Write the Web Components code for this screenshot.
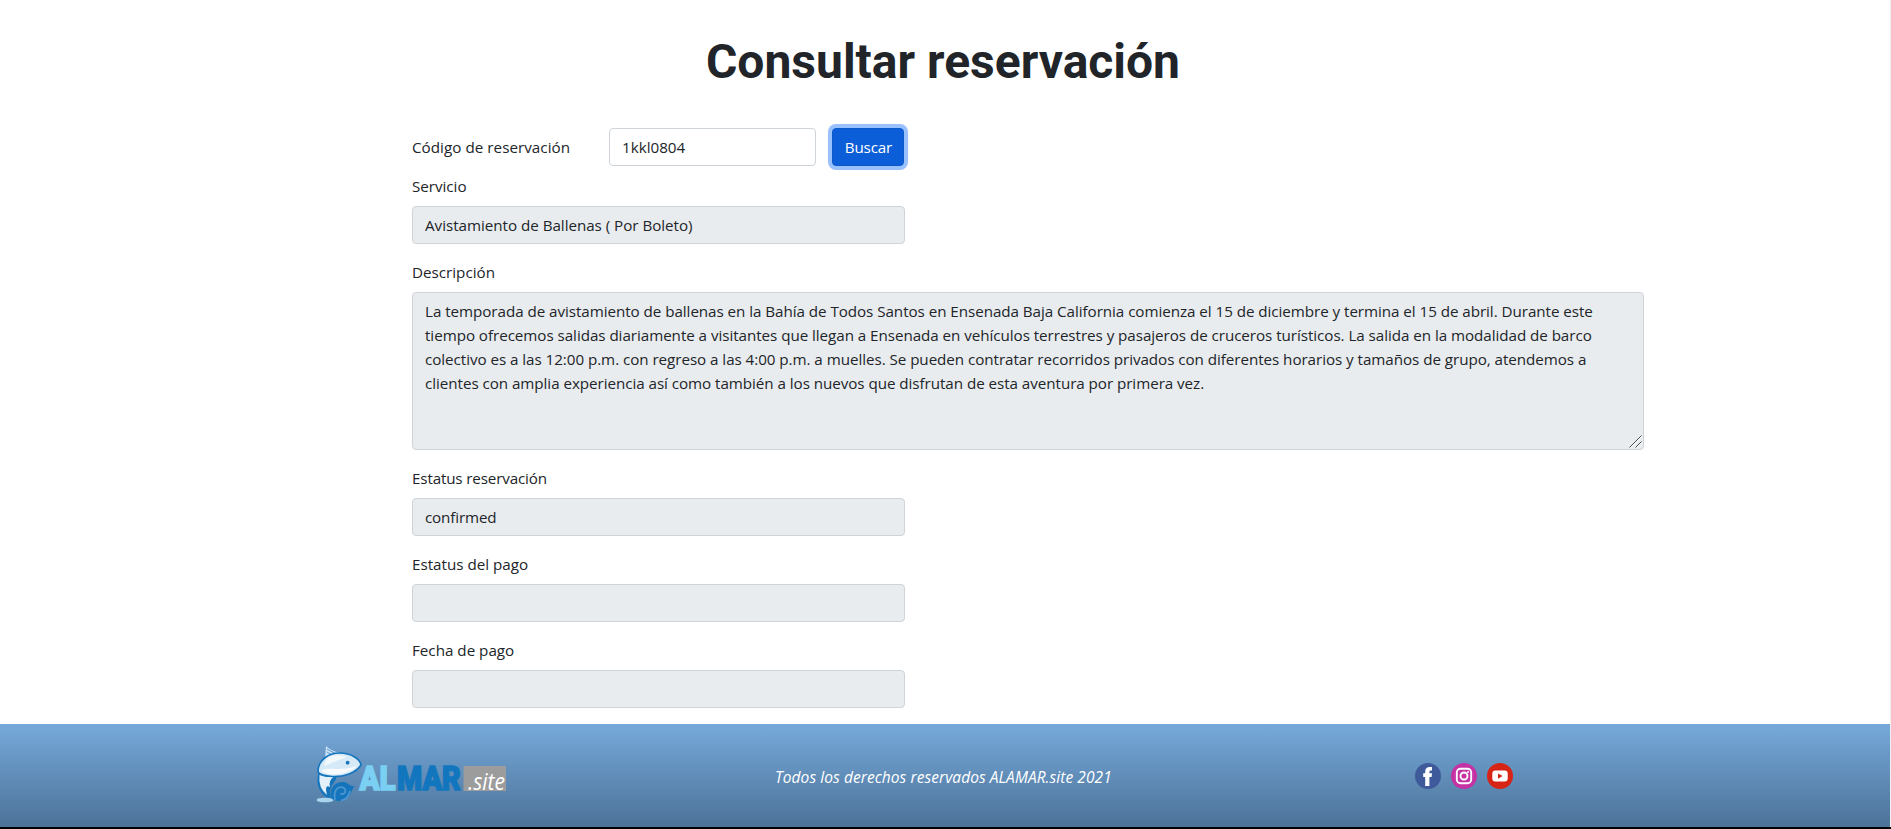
<!DOCTYPE html>
<html lang="es">
<head>
<meta charset="utf-8">
<title>Consultar reservación</title>
<style>
html,body{margin:0;height:100%;background:#fff}
body{font:15.2px/24px "Open Sans","Noto Sans",sans-serif;color:#212529;overflow:hidden}
</style>
</head>
<body>
<reservation-page></reservation-page>
<script>
const define = (name, html, setup) => customElements.define(name, class extends HTMLElement {
  connectedCallback() {
    if (this.shadowRoot) return;
    const t = document.createElement('template');
    t.innerHTML = html;
    this.attachShadow({mode: 'open'}).append(t.content.cloneNode(true));
    if (setup) setup(this, this.shadowRoot);
  }
});

const control = `
  input,textarea{box-sizing:border-box;display:block;width:100%;height:38px;margin:0;padding:6px 12px;
    border:1px solid #ced4da;border-radius:4px;background:#e9ecef;color:#212529;
    font:inherit;letter-spacing:inherit;outline:0}
  textarea{height:158px;resize:none;overflow:hidden;white-space:pre;letter-spacing:-.05px}`;

define('page-title', `
<style>:host{display:block;text-align:center}
h1{margin:0;font:700 48px/58px Roboto,sans-serif}</style><h1><slot></slot></h1>`);

define('text-field', `
<style>:host{display:block;position:relative;width:493px;margin-bottom:16px}
:host([wide]){width:1232px}
label{display:block;margin-bottom:8px}
svg{display:none;position:absolute;right:2px;bottom:2px}
:host([wide]) svg{display:block}${control}</style>
<label></label><svg width="13" height="13" viewBox="0 0 13 13"><path d="M.5 12.5L12.5 .5M6.5 12.5L12.5 6.5" stroke="#4a4d50" stroke-width="1"/><path d="M1.5 12.8L12.8 1.5M7.5 12.8L12.8 7.5" stroke="#fff" stroke-width=".8"/></svg>`, (el, root) => {
  root.querySelector('label').textContent = el.getAttribute('label');
  const c = document.createElement(el.hasAttribute('wide') ? 'textarea' : 'input');
  c.readOnly = true;
  c.spellcheck = false;
  c.value = el.hasAttribute('wide') ? el.textContent.trim() : el.getAttribute('value') || '';
  root.querySelector('label').after(c);
});

define('search-row', `
<style>:host{display:flex;align-items:center;height:38px;margin-bottom:8px}
label{width:197px;letter-spacing:.04px}
${control}
input{width:207px;background:#fff;margin-right:16px}
button{box-sizing:border-box;width:72px;height:38px;margin:0;padding:0 0 0 1px;border:1px solid #0a58ca;border-radius:4px;
background:#0b5ed7;color:#fff;font:inherit;letter-spacing:-.15px;box-shadow:0 0 0 4px #98c1fe}</style>
<label>Código de reservación</label><input value="1kkl0804" spellcheck="false"><button>Buscar</button>`);

define('almar-logo', `
<style>:host{display:block;width:192px;height:60px}svg{display:block}</style>
<svg width="192" height="60" viewBox="315 745 192 60">
  <path d="M325 759L326 747Q331 752 340 754Z" fill="#c9e1f3"/>
  <path d="M327 750L336 755M327 753L332 756" fill="none" stroke="#4d90c9" stroke-width=".9"/>
  <ellipse cx="325" cy="801" rx="8.5" ry="2.3" fill="#a8d4ee"/>
  <path d="M319 773C315 783 319 793 326 798L331 799C329 793 330 788 335 782L337 777Z" fill="#1475bd"/>
  <path d="M319.5 776Q327 779 334 777.5Q328 782 330 788Q324 785 327 796Q318 789 319.500 776Z" fill="#e3f0f9"/>
  <path d="M318 773C318 761 328 754 340 754C351 754 360 760 361 766C356 774 344 778 332 777.500C325 777 320 776 318 773Z" fill="#d6e9f7" stroke="#1475bd" stroke-width="1.7"/>
  <path d="M321 772C327 767 339 773 357 767C348 776 330 778 321 772Z" fill="#f7fbfe"/>
  <path d="M329 758Q338 754.500 347 758Q336 762 324 767Q325 761 329 758Z" fill="#f2f9fd"/>
  <path d="M331 799C329 788 336 782 344 783C349 784 350 788 355 787C351 790 352 798 344 801C339 803 334 802 331 799Z" fill="#1475bd"/>
  <path d="M335 801C333 791 338 787 343 788.500C348 791 344 797 340.500 794.500M341 801.500Q348 801 350 792" fill="none" stroke="#4f97d0" stroke-width="1.7"/>
  <circle cx="347.600" cy="763.700" r="1.900" fill="#1475bd"/>
  <g font-family="Roboto" font-weight="900" font-size="34" stroke-width="1.600" stroke-linejoin="miter">
    <text transform="translate(359.500 791.300) scale(.86 1)" textLength="42" lengthAdjust="spacingAndGlyphs" fill="#7acff3" stroke="#7acff3">AL</text>
    <text transform="translate(397 791.300) scale(.85 1)" textLength="75" lengthAdjust="spacingAndGlyphs" fill="#1276bf" stroke="#1276bf">MAR</text>
  </g>
  <rect x="463.500" y="767" width="42.500" height="25" fill="#9c9c9c"/>
  <text transform="translate(468 790.500) scale(.84 1)" font-family="Open Sans" font-style="italic" font-size="23" textLength="44" lengthAdjust="spacingAndGlyphs" fill="#fff">.site</text>
</svg>`);

define('social-links', `
<style>:host{display:flex;gap:10px}svg{display:block}</style>
<svg width="26" height="26" viewBox="0 0 26 26"><circle cx="13" cy="13" r="13" fill="#3f5a9b"/><path d="M10.2 23V14H8.200V10.300H10.200V8.500Q10.200 4 14.800 4H17V7.600H15.600Q14.400 7.600 14.400 9V10.300H17L16.600 14H14.400V23Z" fill="#fff"/></svg>
<svg width="26" height="26" viewBox="0 0 26 26"><circle cx="13" cy="13" r="13" fill="#c532a4"/><rect x="5.800" y="5.800" width="14.400" height="14.400" rx="3.600" fill="none" stroke="#fff" stroke-width="1.900"/><circle cx="13" cy="13" r="3.500" fill="none" stroke="#fff" stroke-width="1.900"/><circle cx="17" cy="9" r="1" fill="#fff"/></svg>
<svg width="26" height="26" viewBox="0 0 26 26"><circle cx="13" cy="13" r="13" fill="#d62516"/><rect x="5.300" y="7.600" width="15.400" height="11" rx="3" fill="#fff"/><path d="M11 10.400L15.600 13.100L11 15.800Z" fill="#d62516"/></svg>`);

define('page-footer', `
<style>:host{display:grid;grid-template-columns:775px 640px 1fr;align-items:center;box-sizing:border-box;height:103px;background:linear-gradient(#76a9da,#4c7298);color:#fff}
almar-logo{margin:-3px 0 0 315px}
social-links{margin-top:1px}
p{margin:2px 0 0;font-style:italic;font-size:15.5px;letter-spacing:.07px;white-space:nowrap}</style>
<almar-logo></almar-logo><p>Todos los derechos reservados ALAMAR.site 2021</p><social-links></social-links>`);

define('reservation-page', `
<style>:host{display:flex;flex-direction:column;box-sizing:border-box;height:829px;border-bottom:2px solid #000;background:linear-gradient(#f0f0f0,#f0f0f0) right/1px 100% no-repeat #fff;padding-right:1px}
page-title{padding:33px 4px 37px 0}
main{flex:1;padding-left:412px}
.tight{letter-spacing:-.15px}
</style>
<page-title>Consultar reservación</page-title>
<main>
<search-row></search-row>
<text-field label="Servicio" value="Avistamiento de Ballenas ( Por Boleto)" style="letter-spacing:-.03px"></text-field>
<text-field wide label="Descripción">La temporada de avistamiento de ballenas en la Bahía de Todos Santos en Ensenada Baja California comienza el 15 de diciembre y termina el 15 de abril. Durante este
tiempo ofrecemos salidas diariamente a visitantes que llegan a Ensenada en vehículos terrestres y pasajeros de cruceros turísticos. La salida en la modalidad de barco
colectivo es a las 12:00 p.m. con regreso a las 4:00 p.m. a muelles. Se pueden contratar recorridos privados con diferentes horarios y tamaños de grupo, atendemos a
clientes con amplia experiencia así como también a los nuevos que disfrutan de esta aventura por primera vez.</text-field>
<text-field class="tight" label="Estatus reservación" value="confirmed"></text-field>
<text-field label="Estatus del pago"></text-field>
<text-field label="Fecha de pago"></text-field>
</main>
<page-footer></page-footer>`);
</script>
</body>
</html>
